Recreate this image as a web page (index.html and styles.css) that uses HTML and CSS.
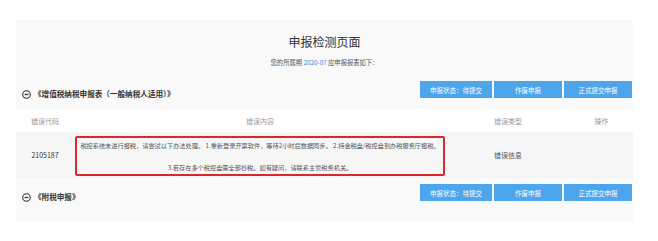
FILE: index.html
```html
<!DOCTYPE html>
<html lang="zh-CN">
<head>
    <meta charset="UTF-8">
    <title>申报检测页面</title>
    <link rel="stylesheet" href="styles.css">
</head>
<body>

<div class="page">
    <h1 class="page-title">申报检测页面</h1>
    <p class="page-sub">您的所属期 <span class="period">2020-07</span> 应申报报表如下：</p>

    <div class="section">
        <div class="section-head">
            <div class="section-name">
                <svg class="toggle" width="9" height="9" viewBox="0 0 9 9">
                    <circle cx="4.5" cy="4.5" r="3.8" fill="none" stroke="#333" stroke-width="1.1"/>
                    <line x1="2.6" y1="4.5" x2="6.4" y2="4.5" stroke="#333" stroke-width="1.3"/>
                </svg>
                <span>《增值税纳税申报表（一般纳税人适用）》</span>
            </div>
            <div class="actions">
                <button class="btn btn-status">申报状态：待提交</button>
                <button class="btn btn-mid">作废申报</button>
                <button class="btn btn-mid">正式提交申报</button>
            </div>
        </div>
        <table class="errors">
            <colgroup>
                <col class="c-code">
                <col class="c-content">
                <col class="c-type">
                <col class="c-op">
            </colgroup>
            <thead>
                <tr>
                    <th>错误代码</th>
                    <th>错误内容</th>
                    <th>错误类型</th>
                    <th>操作</th>
                </tr>
            </thead>
            <tbody>
                <tr>
                    <td class="code">2105187</td>
                    <td class="content">
                        <div class="notice">
                            <p>税控系统未进行报税，请尝试以下办法处理。 1.重新登录开票软件，等待2小时后数据同步。 2.持金税盘/税控盘到办税服务厅报税。</p>
                            <p class="second">3.若存在多个税控盘需全部抄税。如有疑问，请联系主管税务机关。</p>
                        </div>
                    </td>
                    <td class="type">错误信息</td>
                    <td></td>
                </tr>
            </tbody>
        </table>
    </div>

    <div class="section">
        <div class="section-head">
            <div class="section-name">
                <svg class="toggle" width="9" height="9" viewBox="0 0 9 9">
                    <circle cx="4.5" cy="4.5" r="3.8" fill="none" stroke="#333" stroke-width="1.1"/>
                    <line x1="2.6" y1="4.5" x2="6.4" y2="4.5" stroke="#333" stroke-width="1.3"/>
                </svg>
                <span>《附税申报》</span>
            </div>
            <div class="actions">
                <button class="btn btn-status">申报状态：待提交</button>
                <button class="btn btn-mid">作废申报</button>
                <button class="btn btn-mid">正式提交申报</button>
            </div>
        </div>
    </div>
</div>

</body>
</html>
```

FILE: styles.css
```css
body {
    margin: 0;
    background: #fff;
    font-family: "Noto Sans CJK SC", "Noto Sans", sans-serif;
    color: #333;
}
.page {
    width: 617px;
    margin: 20px 0 0 16px;
    padding: 14px 0 9px;
    background: #f9f9f9;
}
.page-title {
    margin: 0;
    font-size: 12px;
    line-height: 16px;
    font-weight: normal;
    text-align: center;
    color: #333;
}
.page-sub {
    margin: 8px 0 0;
    font-size: 6.3px;
    line-height: 10px;
    text-align: center;
    color: #555;
}
.period {
    color: #3b7fd9;
}
.section {
    margin-top: 7px;
}
.section + .section {
    margin-top: 0;
}
.section-head {
    display: flex;
    justify-content: space-between;
    align-items: flex-start;
    padding: 6px 1px 9px 6px;
}
.section-name {
    display: flex;
    align-items: center;
    gap: 3px;
    margin-top: 7px;
    font-size: 7.6px;
    line-height: 12px;
    font-weight: bold;
    color: #333;
}
.toggle {
    display: block;
}
.actions {
    display: flex;
    gap: 2px;
}
.btn {
    height: 17px;
    padding: 0;
    border: none;
    background: #4da6ec;
    color: #fff;
    font-family: inherit;
    font-size: 6.5px;
}
.btn-status {
    width: 72px;
}
.btn-mid {
    width: 68px;
}
.errors {
    width: 100%;
    border-collapse: collapse;
    table-layout: fixed;
}
.c-code { width: 58px; }
.c-content { width: 372px; }
.c-type { width: 124px; }
.c-op { width: 63px; }
.errors th {
    height: 23px;
    padding: 0;
    background: #fff;
    font-size: 7px;
    font-weight: normal;
    color: #999;
    text-align: center;
}
.errors td {
    padding: 0;
    background: #f6f6f6;
    text-align: center;
    font-size: 7px;
    border-bottom: 1px solid #fbeeee;
}
.errors td.code {
    color: #333;
}
.errors td.type {
    color: #555;
}
.errors td.content {
    padding: 4px 1px 1px;
}
.notice {
    border: 2px solid #d9272d;
    border-radius: 2px;
    padding: 4px 2px 2px;
    font-size: 6.2px;
    line-height: 8px;
    color: #555;
}
.notice p {
    margin: 0;
    white-space: nowrap;
}
.notice .second {
    margin-top: 14px;
}
```
